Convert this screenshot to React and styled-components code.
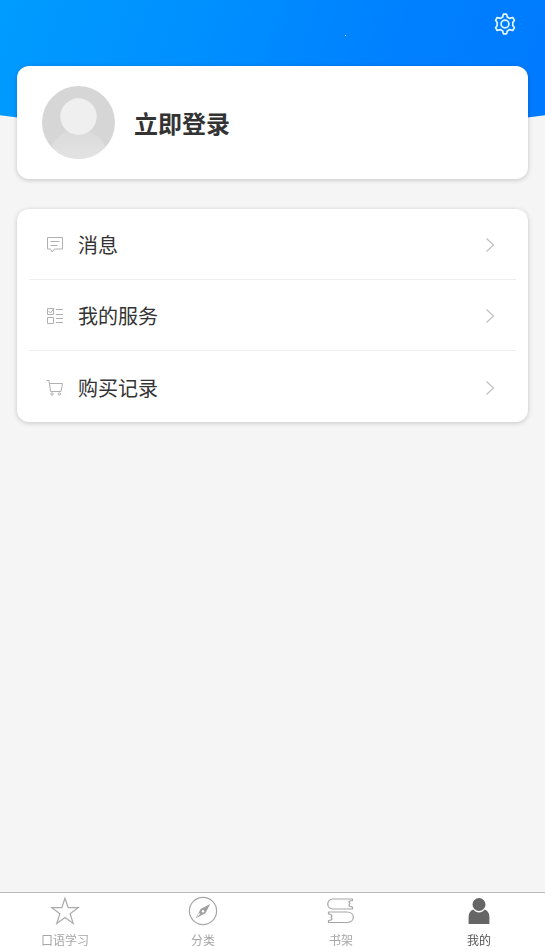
import React from 'react'
import styled, { createGlobalStyle } from 'styled-components'

const menuItems = [
    { label: '消息', icon: <MessageIcon /> },
    { label: '我的服务', icon: <ServiceIcon /> },
    { label: '购买记录', icon: <CartIcon /> },
]

const tabs = [
    { label: '口语学习', icon: <StarIcon /> },
    { label: '分类', icon: <CompassIcon /> },
    { label: '书架', icon: <BooksIcon /> },
    { label: '我的', icon: <UserIcon />, active: true },
]

function App() {
    return (
        <Page>
            <GlobalStyle />
            <Banner><Spark /></Banner>
            <TopBar>
                <SettingsButton type="button" aria-label="设置">
                    <GearIcon />
                </SettingsButton>
            </TopBar>

            <Content>
                <LoginCard type="button">
                    <Avatar />
                    <LoginText>立即登录</LoginText>
                </LoginCard>

                <MenuCard>
                    {menuItems.map((item) => (
                        <MenuRow href="#" key={item.label}>
                            {item.icon}
                            <MenuLabel>{item.label}</MenuLabel>
                            <ChevronIcon />
                        </MenuRow>
                    ))}
                </MenuCard>
            </Content>

            <TabBar>
                {tabs.map((tab) => (
                    <Tab href="#" key={tab.label} $active={tab.active}>
                        {tab.icon}
                        <span>{tab.label}</span>
                    </Tab>
                ))}
            </TabBar>
        </Page>
    )
}

function GearIcon() {
    return (
        <svg width="24" height="24" viewBox="0 0 24 24" fill="none" stroke="#e4f7ff" strokeWidth="1.7" strokeLinejoin="round">
            <path d="M10.4 2.200h3.200l.7 2.800 2.400 1.400 3.100-.9 1.600 2.800-1.600 2.100v3.200l1.600 2.100-1.600 2.800-3.100-.9-2.400 1.400-.7 2.800h-3.200l-.7-2.800-2.400-1.400-3.100.9-1.600-2.800 1.600-2.100v-3.200L2.600 8.300l1.600-2.800 3.100.9L9.700 5z" />
            <circle cx="12" cy="12" r="3.900" />
        </svg>
    )
}

function Avatar() {
    return (
        <svg width="73" height="73" viewBox="0 0 74 74">
            <defs>
                <clipPath id="avatarClip"><circle cx="37" cy="37" r="37" /></clipPath>
                <linearGradient id="avatarBody" x1="0" y1="0" x2="0" y2="1">
                    <stop offset="0" stopColor="#dadada" />
                    <stop offset="0.6" stopColor="#e4e4e4" />
                </linearGradient>
            </defs>
            <g clipPath="url(#avatarClip)">
                <rect width="74" height="74" fill="#d6d6d6" />
                <ellipse cx="37" cy="73" rx="30" ry="29" fill="url(#avatarBody)" />
                <circle cx="37" cy="31" r="18.500" fill="#efefef" />
            </g>
        </svg>
    )
}

function MessageIcon() {
    return (
        <svg width="18" height="18" viewBox="0 0 18 18" fill="none" stroke="#b0b0b0">
            <path d="M1.500 1.500h15v11.500H8.500l-2.500 3-1.500-3h-3z" />
            <path d="M4.500 5.500h9M4.500 9.500h7" />
        </svg>
    )
}

function ServiceIcon() {
    return (
        <svg width="18" height="18" viewBox="0 0 18 18" fill="none" stroke="#b0b0b0">
            <path d="M1.500 1.500h6v6h-6zM1.500 10.500h6v6h-6zM10 2.500h7M10 7.500h7M10 11.500h7M10 15.500h7" />
            <path d="M2.500 4l2 2L8 1.500" />
        </svg>
    )
}

function CartIcon() {
    return (
        <svg width="18" height="18" viewBox="0 0 18 18" fill="none" stroke="#b0b0b0">
            <path d="M.5 1.500H3l1.500 11h10.500M3.500 4.500h13l-1.500 8" />
            <circle cx="6" cy="15" r="1.200" />
            <circle cx="13.500" cy="15" r="1.200" />
        </svg>
    )
}

function ChevronIcon() {
    return (
        <svg width="10" height="16" viewBox="0 0 10 16" fill="none" stroke="#c0c0c0" strokeWidth="1.200">
            <path d="M1.500 1.500L8.500 8l-7 6.500" />
        </svg>
    )
}

function StarIcon() {
    return (
        <svg width="30" height="30" viewBox="0 0 30 30" fill="none" stroke="#aaa" strokeWidth="1.200">
            <path d="M15 2.200l3.200 9.500h10l-8.100 6 3.100 9.800-8.200-6-8.200 6 3.100-9.800-8.100-6h10z" />
        </svg>
    )
}

function CompassIcon() {
    return (
        <svg width="30" height="30" viewBox="0 0 30 30" fill="none" stroke="#a6a6a6" strokeWidth="1.200">
            <circle cx="15" cy="15" r="13.600" />
            <path d="M22.200 8.100L12.600 13l-4.800 9.300 9.600-5z" fill="#a0a0a0" stroke="none" />
            <circle cx="15" cy="15.200" r="1.200" fill="#fff" stroke="none" />
            <path d="M12.500 17.500l-3.600 3.700 1.800-3.900z" fill="#fff" stroke="none" />
        </svg>
    )
}

function BooksIcon() {
    return (
        <svg width="30" height="30" viewBox="0 0 30 30" fill="none" stroke="#a6a6a6" strokeWidth="1.200" strokeLinejoin="round">
            <path d="M26.500 3H7C0 3 0 13 7 13h19.500v-2c-2-.2-3.500-.8-3.500-1.800 0-.8 1-1.200 1-1.700s-1-.8-1-1.500c0-.9 1.500-1.300 3.500-1.500z" />
            <path d="M2.500 16H21c8.500 0 8.500 10.500 0 10.500H2.500v-2C4.500 24.300 6 23.700 6 22.700c0-.7-1-1-1-1.500s1-.8 1-1.500c0-.9-1.500-1.500-3.500-1.700z" />
        </svg>
    )
}

function UserIcon() {
    return (
        <svg width="30" height="30" viewBox="0 0 30 30" fill="#666">
            <path d="M4.600 28v-7c0-4 1.800-6.500 4.700-7.500 3 4 8.400 4 11.400 0 2.900 1 4.700 3.500 4.700 7.500v7z" />
            <circle cx="15" cy="8.500" r="6.500" />
        </svg>
    )
}

const GlobalStyle = createGlobalStyle`
    * {
        box-sizing: border-box;
    }
    body {
        margin: 0;
        background: #f5f5f5;
        color: #333;
        font-family: "Noto Sans CJK SC", sans-serif;
    }
    button {
        border: none;
        font-family: inherit;
        color: inherit;
        cursor: pointer;
    }
    a {
        color: inherit;
        text-decoration: none;
    }
    svg {
        display: block;
        flex-shrink: 0;
    }
`

const Page = styled.div`
    position: relative;
    min-height: 100vh;
    display: flex;
    flex-direction: column;
`

// curved blue background, sits behind the top bar and login card
const Banner = styled.div`
    position: absolute;
    top: 0;
    left: 0;
    right: 0;
    height: 133px;
    background: linear-gradient(110deg, #009cff, #0090ff 35%, #0080ff 70%, #007aff);
    clip-path: ellipse(100% 100% at 50% 0);
`

const Spark = styled.i`
    position: absolute;
    top: 35px;
    left: 345px;
    width: 1px;
    height: 1px;
    background: #fff;
`

const TopBar = styled.header`
    position: relative;
    height: 66px;
    padding: 12px 28px;
    display: flex;
    justify-content: flex-end;
    align-items: flex-start;
`

const SettingsButton = styled.button`
    padding: 0;
    background: none;
`

const Content = styled.main`
    position: relative;
    flex: 1;
    padding: 0 17px 30px;
    display: flex;
    flex-direction: column;
    gap: 30px;
`

const LoginCard = styled.button`
    width: 100%;
    padding: 20px 25px;
    display: flex;
    align-items: center;
    gap: 19px;
    text-align: left;
    background: #fff;
    border-radius: 12px;
    box-shadow: 0 1px 5px rgba(0, 0, 0, 0.2);
`

const LoginText = styled.span`
    font-size: 24px;
    line-height: 32px;
    font-weight: 700;
`

const MenuCard = styled.nav`
    padding: 0 12px;
    background: #fff;
    border-radius: 12px;
    box-shadow: 0 1px 5px rgba(0, 0, 0, 0.2);
`

const MenuRow = styled.a`
    height: 71px;
    padding: 2px 21px 0 17px;
    display: flex;
    align-items: center;
    gap: 14px;
    border-bottom: 1px solid #eee;

    &:last-child {
        border-bottom: none;
    }
`

const MenuLabel = styled.span`
    flex: 1;
    font-size: 20px;
    line-height: 28px;
`

const TabBar = styled.nav`
    position: sticky;
    bottom: 0;
    height: 55px;
    padding: 3px 41px 0 40px;
    display: flex;
    justify-content: space-between;
    background: #fff;
    border-top: 1px solid #b8b8b8;
`

const Tab = styled.a`
    width: 50px;
    display: flex;
    flex-direction: column;
    align-items: center;
    gap: 4px;
    font-size: 12px;
    line-height: 20px;
    white-space: nowrap;
    color: ${(props) => (props.$active ? '#555' : '#a6a6a6')};
`

export default App
